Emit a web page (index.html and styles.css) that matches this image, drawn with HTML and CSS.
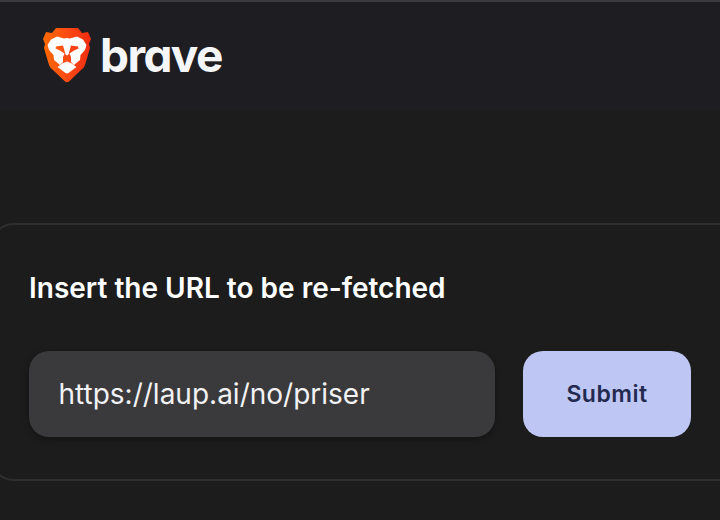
FILE: index.html
```html
<!DOCTYPE html>
<html lang="en">
<head>
<meta charset="utf-8">
<title>Brave</title>
<link rel="stylesheet" href="styles.css">
</head>
<body>
<header class="header">
  <svg class="lion" viewBox="0 0 48 56" aria-hidden="true">
    <defs>
      <linearGradient id="shield" x1="0" y1="0" x2="1" y2="0">
        <stop offset="0" stop-color="#ff6a00"/>
        <stop offset="0.5" stop-color="#fb4a14"/>
        <stop offset="1" stop-color="#f02b10"/>
      </linearGradient>
    </defs>
    <path fill="url(#shield)" d="M13 1 L35 1 L39 6 L45 5 L48 12 L46 17 L47 21 L42 38 Q41 41 38 43 L26 54.5 Q24 56 22 54.5 L10 43 Q7 41 6 38 L1 21 L2 17 L0 12 L3 5 L9 6 Z"/>
    <path fill="#fff" d="M14 9.5 L21 11.5 L24 11 L27 11.5 L34 9.5 L40 12.5 L43.5 18 L42 23 L37.5 28 L37 33 L31 38 L28 35 L28 30 L26.5 26.5 L31 23.5 L35.5 21.5 L35 19.5 L28 18.5 L25.5 27.5 L24 28.5 L22.5 27.5 L20 18.5 L13 19.5 L12.5 21.5 L17 23.5 L21.5 26.5 L20 30 L20 35 L17 38 L11 33 L10.5 28 L6 23 L4.5 18 L8 12.5 Z"/>
    <path fill="#fff" d="M24 34.5 L28 36 L33.5 40 L25.5 46 L24 46.5 L22.5 46 L14.5 40 L20 36 Z"/>
  </svg>
  <span class="wordmark">brave</span>
</header>
<main class="card">
  <h1 class="title">Insert the URL to be re-fetched</h1>
  <form class="row">
    <input class="url" type="text" value="https://laup.ai/no/priser">
    <button class="submit" type="button">Submit</button>
  </form>
</main>
</body>
</html>
```
FILE: styles.css
```css
html, body {
  margin: 0;
  height: 520px;
  overflow: hidden;
  background: #1c1c1c;
  font-family: Inter, "Liberation Sans", sans-serif;
}
.header {
  display: flex;
  align-items: flex-start;
  gap: 9px;
  box-sizing: border-box;
  height: 110px;
  padding: 25px 0 0 43px;
  background: #1e1e22;
  border-top: 2px solid #3a3a40;
}
.lion {
  width: 48px;
  height: 56px;
  flex: none;
}
.wordmark {
  font-size: 46px;
  font-weight: 650;
  font-feature-settings: "cv11" 1;
  letter-spacing: -1.6px;
  color: #f5f6f8;
  line-height: 56px;
}
.card {
  margin: 113px -30px 0 -10px;
  height: 258px;
  box-sizing: border-box;
  border: 2px solid #2f2f2f;
  border-radius: 24px;
  padding: 45px 0 0 37px;
}
.title {
  margin: 0;
  font-size: 28px;
  font-weight: 600;
  line-height: 36px;
  color: #fff;
}
.row {
  display: flex;
  gap: 28px;
  margin-top: 45px;
}
.url {
  width: 466px;
  height: 86px;
  box-sizing: border-box;
  padding: 0 29.5px;
  border: 0;
  border-radius: 20px;
  background: #3a3a3c;
  box-shadow: 0 2px 6px rgba(0, 0, 0, 0.35);
  color: #f2f2f4;
  font: 400 28px Inter, "Liberation Sans", sans-serif;
  outline: none;
}
.submit {
  width: 168px;
  height: 86px;
  border: 0;
  border-radius: 20px;
  background: #bec7f3;
  color: #232a50;
  font: 600 23px Inter, "Liberation Sans", sans-serif;
  letter-spacing: 0.5px;
}
```
